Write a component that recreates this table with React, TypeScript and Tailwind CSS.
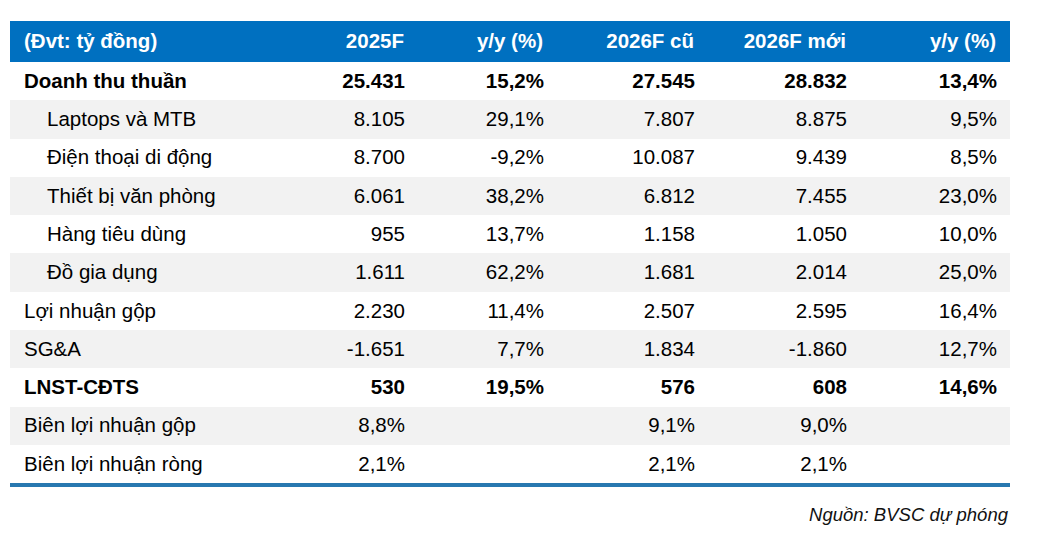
type Row = {
  label: string;
  values: string[];
  bold?: boolean;
  indent?: boolean;
  shaded?: boolean;
};

const rows: Row[] = [
  { label: "Doanh thu thuần", values: ["25.431", "15,2%", "27.545", "28.832", "13,4%"], bold: true },
  { label: "Laptops và MTB", values: ["8.105", "29,1%", "7.807", "8.875", "9,5%"], indent: true, shaded: true },
  { label: "Điện thoại di động", values: ["8.700", "-9,2%", "10.087", "9.439", "8,5%"], indent: true },
  { label: "Thiết bị văn phòng", values: ["6.061", "38,2%", "6.812", "7.455", "23,0%"], indent: true, shaded: true },
  { label: "Hàng tiêu dùng", values: ["955", "13,7%", "1.158", "1.050", "10,0%"], indent: true },
  { label: "Đồ gia dụng", values: ["1.611", "62,2%", "1.681", "2.014", "25,0%"], indent: true, shaded: true },
  { label: "Lợi nhuận gộp", values: ["2.230", "11,4%", "2.507", "2.595", "16,4%"] },
  { label: "SG&A", values: ["-1.651", "7,7%", "1.834", "-1.860", "12,7%"], shaded: true },
  { label: "LNST-CĐTS", values: ["530", "19,5%", "576", "608", "14,6%"], bold: true },
  { label: "Biên lợi nhuận gộp", values: ["8,8%", "", "9,1%", "9,0%", ""], shaded: true },
  { label: "Biên lợi nhuận ròng", values: ["2,1%", "", "2,1%", "2,1%", ""] },
];

const headers = ["2025F", "y/y (%)", "2026F cũ", "2026F mới", "y/y (%)"];

const grid = "grid grid-cols-[280px_128px_139px_151px_152px_150px]";

export default function App() {
  return (
    <div
      className="w-[1040px] h-[537px] bg-white pt-[21px] pl-[10px] text-black"
      style={{ fontFamily: '"Liberation Sans", Arial, sans-serif' }}
    >
      <div className="w-[1000px]">
        <div className={`${grid} h-[41px] items-center bg-[#0070c0] text-white font-bold text-[20.5px]`}>
          <div className="pl-[14px]">(Đvt: tỷ đồng)</div>
          {headers.map((h, i) => (
            <div key={i} className="text-right pr-[14px]">
              {h}
            </div>
          ))}
        </div>
        {rows.map((r) => (
          <div
            key={r.label}
            className={`${grid} h-[38.3px] items-center text-[20.5px] ${r.shaded ? "bg-[#f2f2f2]" : "bg-white"} ${r.bold ? "font-bold" : ""}`}
          >
            <div className={r.indent ? "pl-[37px]" : "pl-[14px]"}>{r.label}</div>
            {r.values.map((v, i) => (
              <div key={i} className="text-right pr-[13px]">
                {v}
              </div>
            ))}
          </div>
        ))}
        <div className="h-[4px] bg-[#2878b0]" />
        <div className="mt-[14px] text-right pr-[2px] italic text-[18.5px] text-[#111]">
          Nguồn: BVSC dự phóng
        </div>
      </div>
    </div>
  );
}
